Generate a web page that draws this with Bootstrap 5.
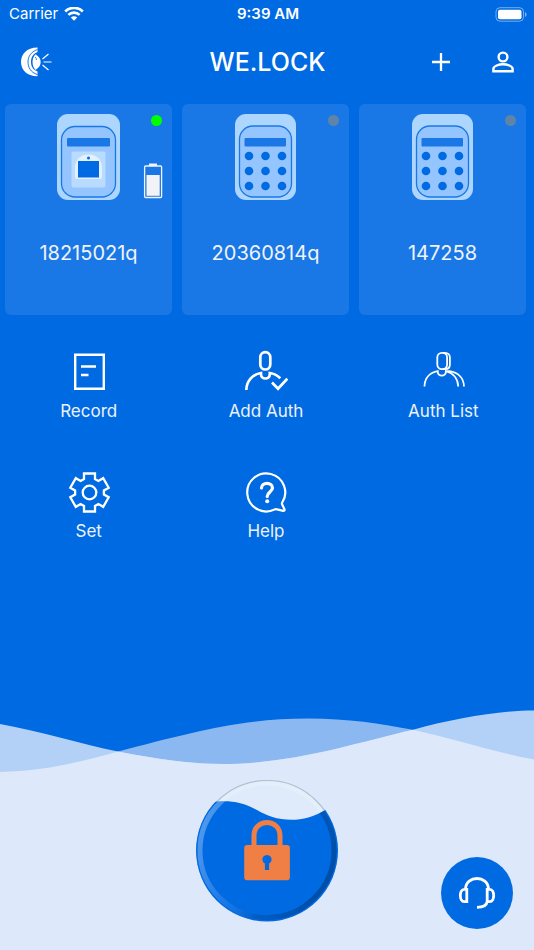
<!DOCTYPE html>
<html lang="en">
<head>
<meta charset="utf-8">
<meta name="viewport" content="width=device-width, initial-scale=1">
<title>WE.LOCK</title>
<link href="https://cdn.jsdelivr.net/npm/bootstrap@5.3.0/dist/css/bootstrap.min.css" rel="stylesheet">
<style>
  body { background: #006ae3; color: #fff; font-family: Inter, "Liberation Sans", sans-serif; }
  svg { display: block; }
  .plain-btn { background: none; border: 0; padding: 0; color: inherit; }
  .status-row { height: 28px; padding: 0 7px 0 9px; font-size: 15px; line-height: 28px; }
  .carrier { gap: 6px; }
  .title-row { height: 68px; padding: 0 19px 0 20px; }
  .title-row h1 { font-size: 25px; line-height: 32px; font-weight: 500; }
  .title-tools { gap: 40px; }
  .third { flex: 1 1 0; }
  .devices { display: grid; grid-template-columns: repeat(3, 1fr); gap: 10px; padding: 8px 8px 0 5px; }
  .device { background: #1a78e6; border-radius: 6px; height: 211px; padding-top: 10px; }
  .device-name { font-size: 20px; line-height: 28px; margin-top: 39px; color: #f0f3f8; }
  .online-dot { top: 11px; right: 10px; width: 11px; height: 11px; border-radius: 50%; background: #5f84a8; }
  .online-dot.is-on { background: #0f0; }
  .charge { top: 59px; right: 9px; }
  .actions { padding: 34px 2px 0 0; }
  .action { height: 120px; font-size: 17px; line-height: 24px; color: #eef2f8; }
  .action svg { color: #fff; margin-bottom: 6px; }
  .wave { width: 100%; height: 72px; }
  .shore { background: #dde9fb; height: 170px; }
  .support { width: 72px; height: 72px; border-radius: 50%; background: #006ae3; margin: 0 21px 21px 0; }
</style>
<script src="https://cdn.jsdelivr.net/npm/bootstrap@5.3.0/dist/js/bootstrap.bundle.min.js"></script>
</head>
<body class="d-flex flex-column min-vh-100">

<div class="status-row d-flex align-items-center">
  <div class="third carrier d-flex align-items-center">
    <span>Carrier</span>
    <svg width="20" height="15" viewBox="0 0 20 15" fill="none" stroke="#fff" stroke-width="2.7" aria-hidden="true"><path d="M1.2 4.500C6-.3 14-.3 18.8 4.500M4.400 7.900c3.100-3 8.100-3 11.200 0"/><path d="M10 13.800l-3.200-3.200c1.800-1.700 4.600-1.700 6.400 0z" fill="#fff" stroke="none"/></svg>
  </div>
  <div class="fw-semibold">9:39 AM</div>
  <div class="third d-flex justify-content-end">
    <svg width="32" height="15" viewBox="0 0 32 15" aria-hidden="true"><rect x="1" y=".7" width="27.500" height="13.500" rx="4" fill="none" stroke="#fff" stroke-opacity=".45"/><rect x="3" y="2.700" width="23.500" height="9.500" rx="2" fill="#fff"/><path d="M30 5v5c2-.8 2-4.200 0-5z" fill="#fff" opacity=".5"/></svg>
  </div>
</div>

<header class="title-row d-flex align-items-center">
  <div class="third">
    <svg width="32" height="30" viewBox="0 0 32 30" aria-hidden="true">
      <path d="M17.500.5C6.500.5 1 7.500 1 15s5.500 14.300 16.500 14.300v-4.800C13.500 23 11 20 11 15s2.500-8.500 6.500-10z" fill="#fff"/>
      <path d="M17.500 2.500C10.500 5 8 10 8 15s2.500 10.500 9.500 12.500" fill="none" stroke="#006ae3" stroke-width=".9"/>
      <path d="M15.500 7.200c3.400 2 5.200 4.800 5.200 7.800s-1.800 6-5.200 8c-2-2-3-5-3-8s1-5.800 3-7.800z" fill="#fff"/>
      <path d="M15 10q1.800 1.200 1.300 3" fill="none" stroke="#006ae3" stroke-width=".8"/>
      <path d="M22.500 12l6-5M23.500 15h8M22.500 18l6 5" stroke="#fff" stroke-width="1.200"/>
    </svg>
  </div>
  <h1 class="m-0">WE.LOCK</h1>
  <div class="third title-tools d-flex justify-content-end align-items-center">
    <button class="plain-btn" type="button" aria-label="Add"><svg width="20" height="20" viewBox="0 0 20 20" stroke="#fff" stroke-width="2.300"><path d="M10 1v18M1 10h18"/></svg></button>
    <button class="plain-btn" type="button" aria-label="Account"><svg width="24" height="24" viewBox="0 0 24 24" fill="none" stroke="#fff" stroke-width="2.400"><circle cx="12" cy="7" r="4.400"/><path d="M2.400 21.300v-2.500c0-2.800 5.600-4.500 9.600-4.500s9.600 1.700 9.600 4.500v2.500z"/></svg></button>
  </div>
</header>

<svg width="0" height="0" class="position-absolute" aria-hidden="true">
  <symbol id="keypad" viewBox="0 0 61 86">
    <rect width="61" height="86" rx="11" fill="#add6ff"/>
    <rect x="4.500" y="12" width="52" height="71" rx="13.500" fill="#94c5ff" stroke="#1a78e6" stroke-width="1.300"/>
    <rect x="9.500" y="24" width="41.500" height="8.500" rx="1" fill="#1a78e6"/>
    <g fill="#006ae3"><circle cx="14" cy="42" r="4.300"/><circle cx="30.500" cy="42" r="4.300"/><circle cx="47" cy="42" r="4.300"/><circle cx="14" cy="57" r="4.300"/><circle cx="30.500" cy="57" r="4.300"/><circle cx="47" cy="57" r="4.300"/><circle cx="14" cy="72" r="4.300"/><circle cx="30.500" cy="72" r="4.300"/><circle cx="47" cy="72" r="4.300"/></g>
  </symbol>
</svg>

<main>
  <section class="devices" aria-label="Devices">
    <button type="button" class="plain-btn device position-relative d-flex flex-column align-items-center">
      <svg width="63" height="86" viewBox="0 0 63 86" aria-hidden="true">
        <rect width="63" height="86" rx="11" fill="#add6ff"/>
        <rect x="4.500" y="12.500" width="54" height="70.500" rx="13.500" fill="#94c5ff" stroke="#1a78e6" stroke-width="1.300"/>
        <rect x="10" y="24" width="43" height="8.500" rx="1" fill="#1a78e6"/>
        <rect x="14.500" y="37.500" width="34" height="36" rx="2" fill="#b9dbff"/>
        <path d="M20 65a2 2 0 0 1-2-2v-9c0-8 5-13.500 13.500-13.500S45 46 45 54v9a2 2 0 0 1-2 2z" fill="#e4f0fd"/>
        <rect x="21" y="47" width="21" height="16.500" fill="#006ae3"/>
        <circle cx="31.500" cy="44" r="1.500" fill="#006ae3"/>
      </svg>
      <span class="device-name">18215021q</span>
      <span class="online-dot is-on position-absolute"></span>
      <svg class="charge position-absolute" width="20" height="36" viewBox="0 0 20 36" aria-hidden="true"><path d="M6 .5h8V3H6z" fill="#f2f3f7"/><rect x="1.600" y="3" width="17" height="31.500" rx="1" fill="none" stroke="#f2f3f7" stroke-width="1.300"/><rect x="3.500" y="12" width="13.200" height="20.800" fill="#f2f3f7"/></svg>
    </button>
    <button type="button" class="plain-btn device position-relative d-flex flex-column align-items-center">
      <svg width="61" height="86" aria-hidden="true"><use href="#keypad"/></svg>
      <span class="device-name">20360814q</span>
      <span class="online-dot position-absolute"></span>
    </button>
    <button type="button" class="plain-btn device position-relative d-flex flex-column align-items-center">
      <svg width="61" height="86" aria-hidden="true"><use href="#keypad"/></svg>
      <span class="device-name">147258</span>
      <span class="online-dot position-absolute"></span>
    </button>
  </section>

  <nav class="actions row g-0" aria-label="Actions">
    <div class="col-4"><button type="button" class="plain-btn action w-100 d-flex flex-column align-items-center">
      <svg width="44" height="44" viewBox="0 0 44 44" fill="none" stroke="currentColor" stroke-width="2.400"><path d="M8.200 5.700h28.600v34.100H8.200zM14 17.500h15M14 26h7.500"/></svg>
      Record</button></div>
    <div class="col-4"><button type="button" class="plain-btn action w-100 d-flex flex-column align-items-center">
      <svg width="44" height="44" viewBox="0 0 44 44" fill="none" stroke="currentColor" stroke-width="2.700"><rect x="16.300" y="3.200" width="10" height="17.300" rx="5"/><path d="M2.300 41C2.500 32 8.500 25.500 17 24v1.300c0 5.600 8.800 5.600 8.800 0V24c4 .6 7.500 2.400 10.500 5.200M28 33.500l6 6.200 9.300-10"/></svg>
      Add Auth</button></div>
    <div class="col-4"><button type="button" class="plain-btn action w-100 d-flex flex-column align-items-center">
      <svg width="44" height="44" viewBox="0 0 44 44" fill="none" stroke="currentColor" stroke-width="1.800"><rect x="16.300" y="3.900" width="9.800" height="16.300" rx="4.600"/><path d="M22 3.900h2c3 0 4.900 2 4.900 4.600v7c0 2.700-1.900 4.700-4.900 4.700h-2M3.500 37.500c.2-9 6-14 13.200-15.300 0 6 8.200 6 8.200 0C32 24 37 29.500 37.200 37.500M25 22.200h3.500C37 23.500 42.700 29 43 37.500"/></svg>
      Auth List</button></div>
    <div class="col-4"><button type="button" class="plain-btn action w-100 d-flex flex-column align-items-center">
      <svg width="44" height="44" viewBox="-22.500 -23.500 44 44" fill="none" stroke="currentColor" stroke-width="2.300"><path d="M-5.500-19h11v5.500l3.400 2 4.800-2.800 5.500 9.600-4.800 2.700v4l4.800 2.700-5.500 9.600-4.800-2.800-3.400 2V19h-11v-5.500l-3.400-2-4.800 2.800-5.500-9.600 4.800-2.700v-4l-4.800-2.700 5.500-9.600 4.800 2.800 3.400-2z"/><circle r="6.800"/></svg>
      Set</button></div>
    <div class="col-4"><button type="button" class="plain-btn action w-100 d-flex flex-column align-items-center">
      <svg width="44" height="44" viewBox="-22 -23.500 44 44" fill="none" stroke="currentColor" stroke-width="2.200"><path d="M16 10.500A19 19 0 1 0 8.500 17q1.300-.7 2.700-.1l6 1.500q1.700.1 1.300-1.600l-2.200-4.500q-.5-1-.3-1.800z"/><path d="M-4.500-4.500C-4.500-10.800 6.500-10.800 6.500-4.500 6.500-1 1.200-.5 1.200 4" stroke-width="3.200" stroke-linecap="round"/><circle cx="1.200" cy="8.800" r="2" fill="currentColor" stroke="none"/></svg>
      Help</button></div>
  </nav>
</main>

<footer class="mt-auto">
  <svg class="wave" viewBox="0 0 534 72" preserveAspectRatio="none" aria-hidden="true">
    <clipPath id="swell"><path d="M0 16C40 23 80 36 118 43.500S190 56 222 56c70 0 130-20 192-34.500 40-11 85-19 120-19V72H0z"/></clipPath>
    <path d="M0 64C45 63 80 54 118 43.500 190 25 240 10.500 308 10.500c40 0 72 5 106 11.500 40 9 80 22 120 29.500V72H0z" fill="#8bb8f1"/>
    <g clip-path="url(#swell)">
      <path d="M0 0h534v72H0z" fill="#b3d1f6"/>
      <path d="M0 64C45 63 80 54 118 43.500 190 25 240 10.500 308 10.500c40 0 72 5 106 11.500 40 9 80 22 120 29.500V72H0z" fill="#dde9fb"/>
    </g>
  </svg>
  <div class="shore row g-0">
    <div class="col-4 offset-4 d-flex justify-content-center align-items-start">
      <button type="button" class="plain-btn" aria-label="Unlock">
        <svg width="144" height="144" viewBox="0 0 144 144">
          <defs>
            <clipPath id="disc"><circle cx="72" cy="70.500" r="71"/></clipPath>
            <clipPath id="fill-area"><path d="M0 24.500C28 19.500 43 19.500 62 30 78 40 105 46 131 29.500L144 21v123H0z"/></clipPath>
            <linearGradient id="rim" x1="0" y1=".3" x2="1" y2=".7"><stop offset="0" stop-color="#fff" stop-opacity=".32"/><stop offset=".4" stop-color="#fff" stop-opacity=".08"/><stop offset=".6" stop-color="#000" stop-opacity=".12"/><stop offset="1" stop-color="#000" stop-opacity=".28"/></linearGradient>
          </defs>
          <circle cx="72" cy="70.500" r="70" fill="#e5eefb" stroke="#b3c0d0" stroke-width="1.200"/>
          <circle cx="72" cy="70.500" r="65" fill="#dfebfb"/>
          <g clip-path="url(#disc)">
            <path d="M0 24.500C28 19.500 43 19.500 62 30 78 40 105 46 131 29.500L144 21v123H0z" fill="#006ae3"/>
            <circle cx="72" cy="70.500" r="67" fill="none" stroke="url(#rim)" stroke-width="5" clip-path="url(#fill-area)"/>
          </g>
          <path d="M59 68V55.500c0-17.300 26-17.300 26 0V68" fill="none" stroke="#ef7f45" stroke-width="5"/>
          <rect x="49.200" y="65" width="45.700" height="35.200" rx="3" fill="#ef7f45"/>
          <path d="M69.900 90V83.600a4.600 4.600 0 1 1 4.200 0V90z" fill="#006ae3"/>
        </svg>
      </button>
    </div>
    <div class="col-4 d-flex justify-content-end align-items-end">
      <button type="button" class="plain-btn support" aria-label="Customer support">
        <svg width="72" height="72" viewBox="0 0 72 72" fill="none" stroke="#fff" stroke-width="2.800"><path d="M24.500 32C25 18 47 18 47.500 32M25.800 32.300v12.400h-2.500c-5.300 0-5.300-12.400 0-12.400zM46.200 32.300v12.400h2.500c5.300 0 5.300-12.400 0-12.400zM46.200 44.500C45.700 48.500 41 50.300 36 50.300"/></svg>
      </button>
    </div>
  </div>
</footer>
</body>
</html>
